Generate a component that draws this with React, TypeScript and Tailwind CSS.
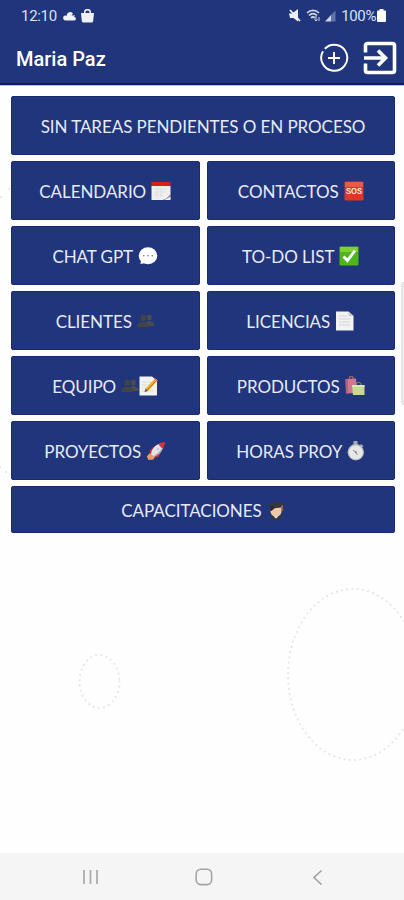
import React from "react";

type IconProps = { className?: string };

function CalendarIcon() {
  return (
    <svg className="h-5 w-5" viewBox="0 0 20 20">
      <path d="M.5 5h19v9.5L14 19H.5z" fill="#f1efef" />
      <path d="M.5 1h19v4H.5z" fill="#d3221d" />
      <path d="M3 8h13M3 11h12M3 14h10M6 6.500v11M10 6.500v11" stroke="#dcdadb" strokeWidth=".7" />
      <path d="M19.500 12.500v6.500H10c4 0 7.500-2.500 9.500-6.500z" fill="#7c7f86" />
      <path d="M19.500 15.500V19h-6z" fill="#f0eeee" />
    </svg>
  );
}

function SosIcon() {
  return (
    <svg className="h-5 w-5" viewBox="0 0 20 20">
      <rect x=".5" y=".5" width="19" height="19" rx="1" fill="#d9382b" />
      <path d="M1 1h18v5H1z" fill="#e85b49" />
      <text x="10" y="13.300" textAnchor="middle" textLength="16" lengthAdjust="spacingAndGlyphs" className="font-['Liberation_Sans',sans-serif] text-[9px] font-bold" fill="#fbe9e7">
        SOS
      </text>
    </svg>
  );
}

function BubbleIcon() {
  return (
    <svg className="h-5 w-5" viewBox="0 0 20 20">
      <ellipse cx="10" cy="9.800" rx="9.300" ry="8.500" fill="#fff" />
      <path d="M3 14l-.5 4 5-1z" fill="#fff" />
      <g fill="#6b7077">
        <circle cx="5.800" cy="9.800" r=".8" />
        <circle cx="10" cy="9.800" r=".8" />
        <circle cx="14.200" cy="9.800" r=".8" />
      </g>
    </svg>
  );
}

function CheckIcon() {
  return (
    <svg className="h-5 w-5" viewBox="0 0 20 20">
      <rect x=".5" y=".5" width="19" height="19" rx="1" fill="#4fb51d" />
      <path d="M1 1h18v5H1z" fill="#7fcf33" />
      <path d="M4.500 10.500l4 4L16 4.500" stroke="#fff" strokeWidth="2.800" fill="none" />
    </svg>
  );
}

function PeopleIcon({ className = "h-5 w-[18px]" }: IconProps) {
  return (
    <svg className={className} viewBox="0 0 18 20">
      <g fill="#4a4c50">
        <ellipse cx="12.300" cy="6.500" rx="2.500" ry="3" />
        <path d="M8 14.500c0-3 1.500-4.500 4-4.500s5.500 1 5.500 5H8z" />
      </g>
      <g fill="#424448">
        <ellipse cx="6.300" cy="7" rx="2.700" ry="3.200" />
        <path d="M.5 16c0-4 2-5 5.500-5s6 1 6 5z" />
      </g>
    </svg>
  );
}

function PageIcon() {
  return (
    <svg className="h-5 w-5" viewBox="0 0 20 20">
      <path d="M1 .5h12.500L18.500 5v14.500H1z" fill="#f3f3f3" />
      <path d="M13.500.5V5h5z" fill="#c8c9cc" />
      <path d="M4 5h8M4 8h11.500M4 11h11.500M4 14h11.500" stroke="#d2d3d5" />
    </svg>
  );
}

function MemoIcon() {
  return (
    <svg className="h-5 w-[19px]" viewBox="0 0 19 20">
      <path d="M.5 .5h12.500l5 4v15H.5z" fill="#f2f2ef" />
      <path d="M3 6h9M3 9h8M3 12h5M3 15h12" stroke="#dedede" />
      <path d="M6.500 12.500L15 3.500l2.700 2.300-8.500 9z" fill="#f0b32d" />
      <path d="M8.300 14L17 4.800" stroke="#b87420" />
      <path d="M6.500 12.500l2.700 2.300-3.700 1.400z" fill="#6d604f" />
      <path d="M15 3.500l1.300-1.300L19 4.500l-1.300 1.300z" fill="#dd7771" />
    </svg>
  );
}

function BagsIcon() {
  return (
    <svg className="h-5 w-5" viewBox="0 0 20 20">
      <path d="M4.500 3V1.500C4.500 0 8 0 8 1.500V3" stroke="#b05c74" strokeWidth="1.200" fill="none" />
      <path d="M.5 3l10.500-.5 1 14.500-11 .5z" fill="#cf7791" />
      <path d="M.5 3l2.200-.1.500 14.500-2.200.1z" fill="#b4607b" />
      <path d="M11 9.500V8c0-2 5-2 5 0v1.500" stroke="#98a865" fill="none" />
      <path d="M7 9h12.500v10H8z" fill="#c6d893" />
      <path d="M7 9h12.500v2H7z" fill="#dce9ae" />
    </svg>
  );
}

function RocketIcon() {
  return (
    <svg className="h-5 w-5" viewBox="0 0 20 20">
      <path d="M4.500 11L.8 15.500l1.700 3.500 5-.5 2-4z" fill="#e79b66" />
      <path d="M8 5.500L4 9l-.5 4 4-2zM15 10l-2 5.500-4 1.500 1-4z" fill="#c42c35" />
      <path d="M5 13C5.500 7 11 2 17 2c.5 5.500-3 11-9 13.500z" fill="#e4e3ea" />
      <path d="M12.500 3.500C14.500 1.800 17 1 19 1c0 2.500-1 5-2.500 7z" fill="#d0353c" />
      <path d="M8 14.500c4-2 6-4 8-7.500h1c-1 4-4 7-8 8.500z" fill="#aaaaba" />
      <circle cx="12" cy="8" r="1.300" fill="#c6c9d3" />
    </svg>
  );
}

function StopwatchIcon() {
  return (
    <svg className="h-5 w-[18px]" viewBox="0 0 18 20">
      <path d="M6.500 0h4v4h-4zM14 3l2.500 2-2 2-2-2z" fill="#a6abb0" />
      <circle cx="8.800" cy="11.300" r="8.200" fill="#b9bdc0" />
      <circle cx="8.800" cy="11.300" r="6.900" fill="#e8e9e7" />
      <path d="M6 9l3 2.300 1.500 2.700" stroke="#8c9094" fill="none" />
      <circle cx="8.800" cy="11.300" r="1" fill="#81858a" />
    </svg>
  );
}

function GraduateIcon() {
  return (
    <svg className="h-5 w-[18px]" viewBox="0 0 18 20">
      <path d="M3 19c0-3 2-4 6-4s6 1 6 4z" fill="#33363c" />
      <path d="M3.500 6h11v5c0 3.500-3 6-5.500 6s-5.500-2.500-5.500-6z" fill="#edc9a8" />
      <path d="M3 5h11v2.500L8 8l-3.500 3L3 10.500z" fill="#332c2b" />
      <path d="M.5 4.500L9 1.500l8.500 3L9 7.500z" fill="#34383e" />
      <path d="M15.500 5v6" stroke="#8d6a3c" />
      <path d="M7 17l2 1.500 2-1.500-1-1H8z" fill="#dedede" />
    </svg>
  );
}

type MenuButtonProps = {
  label: string;
  children?: React.ReactNode;
  className?: string;
};

function MenuButton({ label, children, className = "h-[59px]" }: MenuButtonProps) {
  return (
    <button
      className={`flex items-center justify-center gap-[5px] rounded-[2px] border border-[#192a74] bg-[#20357b] pt-px text-[17px] leading-5 tracking-[-0.07px] whitespace-nowrap text-[#e8eafa] ${className}`}
    >
      <span className="pt-0.5">{label}</span>
      {children && <span className="flex">{children}</span>}
    </button>
  );
}

function StatusBar() {
  return (
    <div className="flex h-8 items-center pr-[18px] pl-[21px] font-[Roboto,sans-serif] text-[15px] text-[#dce1f2]">
      <span className="tracking-[-0.3px]">12:10</span>
      <svg className="ml-1.5 h-[10px] w-[13px]" viewBox="0 0 13 10" fill="#eef0fa">
        <path d="M2.800 9.500a2.500 2.500 0 01-.3-5c.4-.1.900 0 1.300.2A3.400 3.400 0 0110 2.500L8.500 4.500l3.500-.3-1 1.800h.5a1.800 1.800 0 010 3.500z" />
      </svg>
      <svg className="ml-[5px] h-[14px] w-[13px]" viewBox="0 0 13 14" fill="#eef0fa">
        <path d="M0 4h13l-.8 8a1.700 1.700 0 01-1.700 1.500h-8A1.700 1.700 0 01.8 12z" />
        <path d="M3.700 5V3.500a2.800 2.800 0 015.600 0V5" fill="none" stroke="#eef0fa" strokeWidth="1.500" />
      </svg>
      <div className="ml-auto flex items-center">
        <svg className="h-[13px] w-[12px]" viewBox="0 0 12 13" fill="#eef0fa">
          <path d="M0 4.500h3L9 0v12.500L4.500 9H1z" />
          <path d="M1 1l10 11" stroke="#eef0fa" strokeWidth="1.800" />
        </svg>
        <svg className="ml-[5px] h-[13px] w-[15px]" viewBox="0 0 15 13" fill="none" stroke="#cdd4e9" strokeWidth="1.700">
          <path d="M1 4c3.500-3.500 8.500-3.500 12 0M3 6.500c2.500-2.500 5.500-2.500 8 0M5 9c1.500-1.500 2.500-1.500 4 0" />
          <path d="M10 7v5M8.500 10.500L10 12l1.500-1.500M13 12V8" strokeWidth="1" />
        </svg>
        <svg className="ml-1 h-[12px] w-[11px]" viewBox="0 0 11 12">
          <path d="M0 11.500L6 5v6.500z" fill="#cdd4e9" />
          <path d="M6 5l4.500-4.500v11H6z" fill="#6173a5" />
        </svg>
        <span className="ml-[5px] tracking-[-0.4px]">100%</span>
        <svg className="ml-px h-[13px] w-[9px]" viewBox="0 0 9 13" fill="#fff">
          <path d="M2.500 0h4v1.500H8c.5 0 1 .5 1 1V12c0 .5-.5 1-1 1H1c-.5 0-1-.5-1-1V2.500c0-.5.500-1 1-1h1.500z" />
        </svg>
      </div>
    </div>
  );
}

function AppHeader() {
  return (
    <header className="h-[86px] border-b border-[#bdb9e9] bg-[#20357b]">
      <div className="flex h-[85px] flex-col border-b-2 border-[#10185f]">
        <StatusBar />
        <div className="flex h-[52px] items-center pt-[2px] pr-[7px] pl-4">
          <h1 className="pt-px font-[Roboto,sans-serif] text-[20px] font-medium text-white">Maria Paz</h1>
          {/* ring with a small notch at the upper left */}
          <svg className="ml-auto h-[30px] w-[30px]" viewBox="0 0 30 30" fill="none" stroke="#fff">
            <path d="M5.800 5.800A13 13 0 114 8.200" strokeWidth="2" />
            <path d="M15 9v12M9 15h12" strokeWidth="1.900" />
          </svg>
          <svg className="ml-[14px] h-[34px] w-[34px]" viewBox="0 0 34 34" fill="none" stroke="#fff" strokeWidth="3.600">
            <path d="M2.500 11.500V4.500a2 2 0 012-2h25a2 2 0 012 2v25a2 2 0 01-2 2h-25a2 2 0 01-2-2V22.500" />
            <path d="M1 17h21M15 9.500l7.500 7.500-7.500 7.500" />
          </svg>
        </div>
      </div>
    </header>
  );
}

function NavigationBar() {
  return (
    <nav className="flex h-[47px] items-center bg-[#f5f5f5] pt-px pr-[81px] pl-[82px]">
      <svg className="h-4 w-4" viewBox="0 0 16 16" stroke="#a9a9a9" strokeWidth="1.700">
        <path d="M2 1v14M8.500 1v14M15 1v14" />
      </svg>
      <svg className="ml-[97px] h-[18px] w-[18px]" viewBox="0 0 18 18" fill="none" stroke="#a4a4a4" strokeWidth="1.600">
        <rect x="1.200" y="1.200" width="15.400" height="15.400" rx="4.500" />
      </svg>
      <svg className="ml-auto h-[17px] w-[11px]" viewBox="0 0 11 17" fill="none" stroke="#a0a0a0" strokeWidth="1.600">
        <path d="M9.500 1.500L2 8.500l7.500 7" />
      </svg>
    </nav>
  );
}

export default function App() {
  return (
    <div className="relative flex h-[900px] w-[404px] flex-col overflow-hidden bg-[#fefefe] font-[Lato,sans-serif]">
      <AppHeader />

      {/* dotted background decoration */}
      <svg className="pointer-events-none absolute top-0 left-0 h-[900px] w-[404px]" viewBox="0 0 404 900" fill="none">
        <g stroke="#e6e6e6" strokeWidth="2.200" strokeLinecap="round">
          <ellipse cx="99.500" cy="681.500" rx="20" ry="26.500" strokeDasharray="0 5.300" />
          <ellipse cx="353" cy="674.500" rx="65" ry="85.500" strokeDasharray="0 5.300" />
          <path d="M1 197h0M9 189h0M0 467h0M6 472h0" stroke="#e7e7ec" />
        </g>
        <rect x="402" y="282" width="10" height="123" rx="3" fill="#f3f3f3" stroke="#d2d2d2" />
      </svg>

      <main className="relative grid grid-cols-2 gap-x-[7px] gap-y-1.5 pt-[10px] pr-[9px] pl-[11px]">
        <MenuButton label="SIN TAREAS PENDIENTES O EN PROCESO" className="col-span-2 h-[59px]" />
        <MenuButton label="CALENDARIO">
          <CalendarIcon />
        </MenuButton>
        <MenuButton label="CONTACTOS">
          <SosIcon />
        </MenuButton>
        <MenuButton label="CHAT GPT">
          <BubbleIcon />
        </MenuButton>
        <MenuButton label="TO-DO LIST">
          <CheckIcon />
        </MenuButton>
        <MenuButton label="CLIENTES">
          <PeopleIcon />
        </MenuButton>
        <MenuButton label="LICENCIAS">
          <PageIcon />
        </MenuButton>
        <MenuButton label="EQUIPO">
          <PeopleIcon />
          <MemoIcon />
        </MenuButton>
        <MenuButton label="PRODUCTOS">
          <BagsIcon />
        </MenuButton>
        <MenuButton label="PROYECTOS">
          <RocketIcon />
        </MenuButton>
        <MenuButton label="HORAS PROY">
          <StopwatchIcon />
        </MenuButton>
        <MenuButton label="CAPACITACIONES" className="col-span-2 h-[47px]">
          <GraduateIcon />
        </MenuButton>
      </main>

      <div className="mt-auto">
        <NavigationBar />
      </div>
    </div>
  );
}
